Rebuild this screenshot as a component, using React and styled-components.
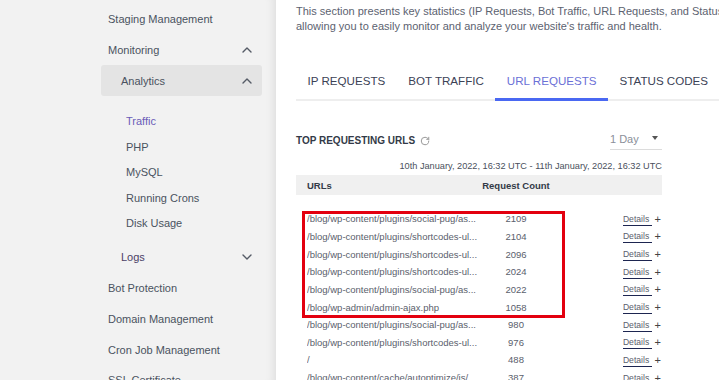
import React from 'react';
import styled, { createGlobalStyle } from 'styled-components';
import { RotateCw } from 'lucide-react';

const GlobalStyle = createGlobalStyle`
body {
    margin: 0;
    background: #ffffff;
    font-family: "Liberation Sans", Arial, sans-serif;
}
`;

const rows = [
    ['/blog/wp-content/plugins/social-pug/as...', 2109],
    ['/blog/wp-content/plugins/shortcodes-ul...', 2104],
    ['/blog/wp-content/plugins/shortcodes-ul...', 2096],
    ['/blog/wp-content/plugins/shortcodes-ul...', 2024],
    ['/blog/wp-content/plugins/social-pug/as...', 2022],
    ['/blog/wp-admin/admin-ajax.php', 1058],
    ['/blog/wp-content/plugins/social-pug/as...', 980],
    ['/blog/wp-content/plugins/shortcodes-ul...', 976],
    ['/', 488],
    ['/blog/wp-content/cache/autoptimize/js/...', 387],
];

const tabs = ['IP REQUESTS', 'BOT TRAFFIC', 'URL REQUESTS', 'STATUS CODES'];

const Chevron = ({ down }) => (
    <svg width="10" height="6" viewBox="0 0 10 6">
        <path
            d={down ? 'M1 1 L5 5 L9 1' : 'M1 5 L5 1 L9 5'}
            fill="none"
            stroke="#555b66"
            strokeWidth="1.4"
            strokeLinecap="round"
            strokeLinejoin="round"
        />
    </svg>
);

const App = () => {
    return (
        <>
            <GlobalStyle />
            <Page>
                <Sidebar>
                    <NavItem>Staging Management</NavItem>
                    <NavItem>Monitoring<Chevron /></NavItem>
                    <SubHead active>Analytics<Chevron /></SubHead>
                    <SubList>
                        <SubLink current>Traffic</SubLink>
                        <SubLink>PHP</SubLink>
                        <SubLink>MySQL</SubLink>
                        <SubLink>Running Crons</SubLink>
                        <SubLink>Disk Usage</SubLink>
                    </SubList>
                    <SubHead>Logs<Chevron down /></SubHead>
                    <NavItem>Bot Protection</NavItem>
                    <NavItem>Domain Management</NavItem>
                    <NavItem>Cron Job Management</NavItem>
                    <NavItem>SSL Certificate</NavItem>
                </Sidebar>

                <Main>
                    <Intro>
                        This section presents key statistics (IP Requests, Bot Traffic, URL Requests, and Status Codes),
                        <br />
                        allowing you to easily monitor and analyze your website's traffic and health.
                    </Intro>

                    <TabBar>
                        {tabs.map((t) => (
                            <Tab key={t} active={t === 'URL REQUESTS'}>{t}</Tab>
                        ))}
                    </TabBar>

                    <Panel>
                        <PanelHead>
                            <Title>TOP REQUESTING URLS <RotateCw size={10} color="#9a9a9a" strokeWidth={2.4} /></Title>
                            <Select>1 Day<Caret /></Select>
                        </PanelHead>
                        <Range>10th January, 2022, 16:32 UTC - 11th January, 2022, 16:32 UTC</Range>

                        <HeadRow>
                            <span>URLs</span>
                            <Count>Request Count</Count>
                            <span />
                        </HeadRow>

                        <Body>
                            {rows.map(([url, n], i) => (
                                <Row key={i}>
                                    <Url>{url}</Url>
                                    <Count>{n}</Count>
                                    <Actions>
                                        <DetailsLink>Details </DetailsLink>
                                        <Plus>+</Plus>
                                    </Actions>
                                </Row>
                            ))}
                            <Highlight />
                        </Body>
                    </Panel>
                </Main>
            </Page>
        </>
    );
};

export default App;

const Page = styled.div`
display: flex;
width: 719px;
height: 380px;
overflow: hidden;
`;

const Sidebar = styled.nav`
width: 276px;
flex-shrink: 0;
box-sizing: border-box;
padding: 4px 14px 0 0;
background: #f2f2f2;
box-shadow: inset -10px 0 10px -8px rgba(0, 0, 0, 0.09);
color: #4a5260;
font-size: 11px;
`;

const NavItem = styled.div`
height: 30.7px;
display: flex;
align-items: center;
justify-content: space-between;
padding: 0 10px 0 108px;
`;

const SubHead = styled.div`
height: 31px;
margin-left: 101px;
display: flex;
align-items: center;
justify-content: space-between;
padding: 0 10px 0 20px;
border-radius: 3px;
background: ${(p) => (p.active ? '#e4e4e4' : 'transparent')};
color: ${(p) => (p.active ? '#4a5260' : '#4b3f66')};
margin-top: ${(p) => (p.active ? '0' : '6px')};
`;

const SubList = styled.div`
display: flex;
flex-direction: column;
padding: 12px 0 0 126px;
`;

const SubLink = styled.div`
height: 25.5px;
display: flex;
align-items: center;
color: ${(p) => (p.current ? '#6a5cb8' : '#4a5260')};
`;

const Main = styled.main`
flex: 1;
padding-left: 20px;
min-width: 0;
overflow: hidden;
`;

const Intro = styled.p`
margin: 4px 0 0;
font-size: 11px;
line-height: 15px;
color: #5c6270;
white-space: nowrap;
`;

const TabBar = styled.div`
display: flex;
margin-top: 28px;
border-bottom: 2px solid #eeeeee;
white-space: nowrap;
`;

const Tab = styled.div`
padding: 12px 11.5px 14px;
font-size: 11.6px;
color: ${(p) => (p.active ? '#6b70d6' : '#3b4255')};
box-shadow: ${(p) => (p.active ? 'inset 0 -3px 0 #4a68f2' : 'none')};
margin-bottom: -2px;
`;

const Panel = styled.section`
width: 366px;
margin-top: 32px;
`;

const PanelHead = styled.div`
display: flex;
align-items: flex-start;
justify-content: space-between;
`;

const Title = styled.h3`
margin: 2px 0 0;
display: flex;
align-items: center;
gap: 5px;
font-size: 10px;
font-weight: 700;
color: #333a47;
`;

const Select = styled.div`
width: 52px;
display: flex;
justify-content: space-between;
padding-bottom: 4px;
border-bottom: 1px solid #dcdcdc;
font-size: 11px;
color: #8a8f99;
`;

const Caret = styled.span`
margin: 3px 4px 0 0;
border-left: 3.5px solid transparent;
border-right: 3.5px solid transparent;
border-top: 4px solid #555;
height: 0;
`;

const Range = styled.div`
margin-top: 11px;
text-align: right;
font-size: 9.2px;
color: #4a505c;
`;

const cols = `
display: grid;
grid-template-columns: 174px 70px 1fr;
align-items: center;
padding-left: 11px;
`;

const HeadRow = styled.div`
${cols}
margin-top: 4px;
height: 20px;
background: #f0f0f0;
font-size: 9.5px;
font-weight: 700;
color: #333a47;
`;

const Body = styled.div`
position: relative;
margin-top: 15px;
`;

const Row = styled.div`
${cols}
height: 17.65px;
font-size: 9.5px;
color: #5a606c;
`;

const Url = styled.span`
white-space: nowrap;
overflow: hidden;
`;

const Count = styled.span`
text-align: center;
white-space: nowrap;
`;

const Actions = styled.span`
display: flex;
justify-content: flex-end;
align-items: center;
gap: 3px;
padding-right: 1px;
`;

const DetailsLink = styled.a`
color: #5a606c;
font-size: 8.6px;
white-space: pre;
border-bottom: 1.5px solid #1d2550;
line-height: 11px;
margin-top: 2px;
cursor: pointer;
`;

const Plus = styled.span`
font-size: 11px;
color: #444;
`;

const Highlight = styled.div`
position: absolute;
left: 6px;
top: 1px;
width: 257px;
height: 101px;
border: 3px solid #e3000f;
pointer-events: none;
`;
